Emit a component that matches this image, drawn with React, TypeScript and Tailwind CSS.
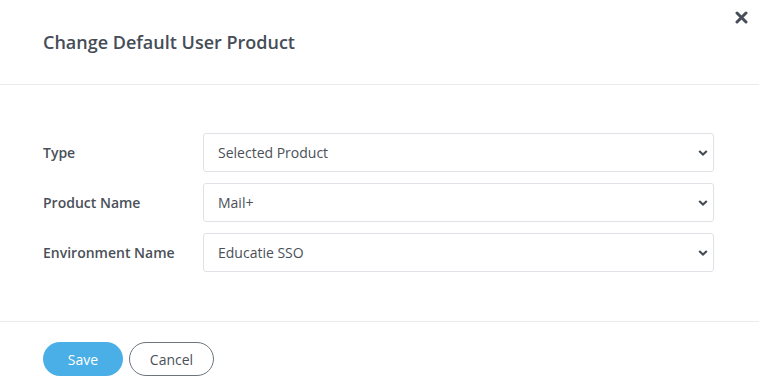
import React from "react";

const rows = [
  { label: "Type", value: "Selected Product" },
  { label: "Product Name", value: "Mail+" },
  { label: "Environment Name", value: "Educatie SSO" },
];

function Chevron() {
  return (
    <svg
      className="pointer-events-none absolute right-[6px] top-1/2 -translate-y-1/2"
      width="10"
      height="7"
      viewBox="0 0 10 7"
      fill="none"
    >
      <path d="M1.2 1.4 L5 5 L8.8 1.4" stroke="#454c55" strokeWidth="2.1" strokeLinecap="butt" />
    </svg>
  );
}

export default function App() {
  return (
    <div
      className="relative w-[759px] h-[390px] bg-white text-[#495057] overflow-hidden"
      style={{ fontFamily: '"Open Sans", "Noto Sans", sans-serif' }}
    >
      <div className="h-[85px] border-b border-[#e9ecef] flex items-center px-[43px]">
        <h2 className="text-[18px] font-semibold text-[#454d57] leading-none pb-[1px]">
          Change Default User Product
        </h2>
      </div>
      <button className="absolute right-[11px] top-[10px] w-[14px] h-[14px] flex items-center justify-center">
        <svg width="13" height="13" viewBox="0 0 13 13">
          <path d="M2 2 L11 11 M11 2 L2 11" stroke="#474e57" strokeWidth="3" strokeLinecap="round" />
        </svg>
      </button>
      <div className="h-[237px] border-b border-[#e9ecef] pt-[48px] pl-[43px] pr-[45px] flex flex-col gap-[11px]">
        {rows.map((r) => (
          <div key={r.label} className="flex items-center h-[39px]">
            <label className="w-[160px] shrink-0 text-[14px] font-semibold text-[#4a5058]">
              {r.label}
            </label>
            <div className="relative flex-1 h-[39px]">
              <select
                className="appearance-none w-full h-full border border-[#dfe2e7] rounded-[3px] bg-white pl-[14px] text-[14px] text-[#4a5058] outline-none"
                defaultValue={r.value}
              >
                <option>{r.value}</option>
              </select>
              <Chevron />
            </div>
          </div>
        ))}
      </div>
      <div className="flex items-start gap-[6px] pt-[20px] pl-[43px]">
        <button className="w-[80px] h-[34px] rounded-full bg-[#4aafe6] text-white text-[14px]">
          Save
        </button>
        <button className="w-[85px] h-[34px] rounded-full border border-[#6c757d] bg-white text-[14px] text-[#4a5058]">
          Cancel
        </button>
      </div>
    </div>
  );
}
